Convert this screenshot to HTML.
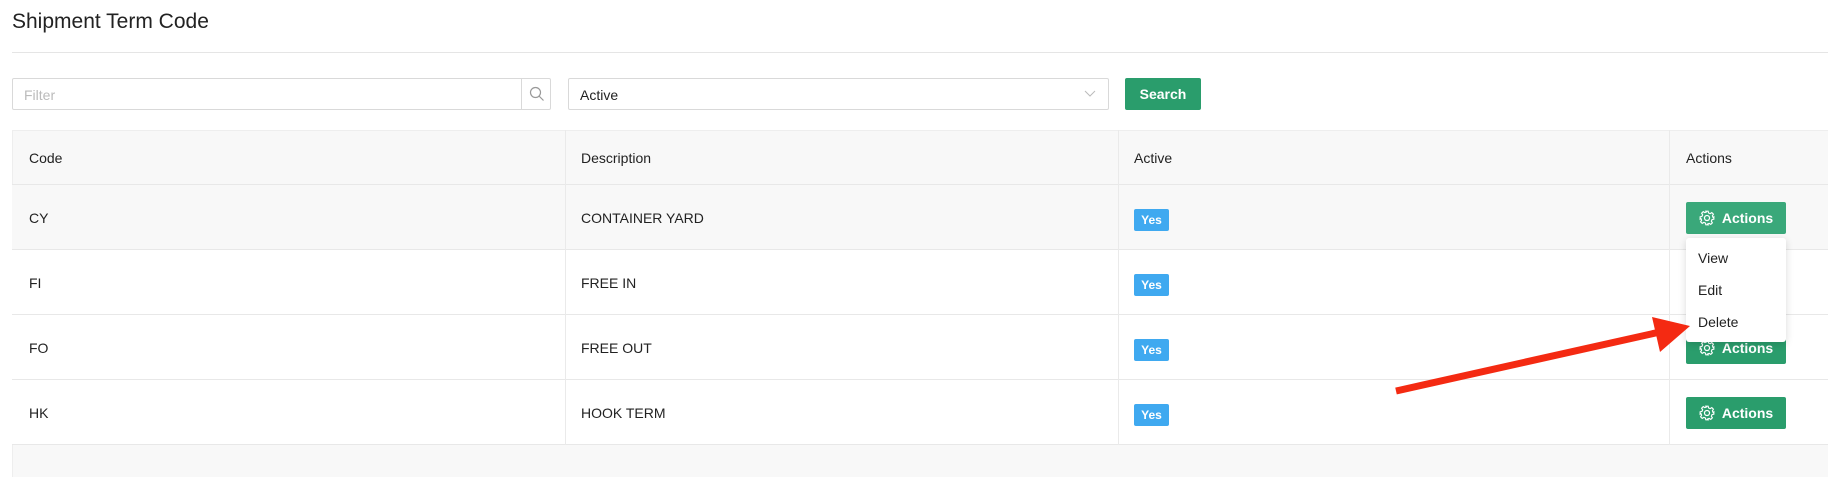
<!DOCTYPE html>
<html><head><meta charset="utf-8"><style>
*{box-sizing:border-box;margin:0;padding:0}
body{width:1828px;height:477px;overflow:hidden;background:#fff;font-family:"Liberation Sans",sans-serif;color:#222;position:relative;font-size:14px}
.abs{position:absolute}
.title{left:12px;top:10px;font-size:21px;color:#222}
.hr{left:12px;top:52px;width:1816px;height:1px;background:#e5e5e5}
.inp{top:78px;height:32px;border:1px solid #d9d9d9;border-radius:2px;background:#fff}
.btn{background:#2a9d6c;color:#fff;border-radius:2px;font-weight:bold;display:flex;align-items:center;justify-content:center}
.table{left:12px;top:130px;width:1816px;height:347px;background:#f8f8f8;border-left:1px solid #eee;border-top:1px solid #eee}
.row{position:absolute;left:12px;width:1816px;height:65px;border-bottom:1px solid #e8e8e8}
.vl{position:absolute;top:130px;height:315px;width:1px;background:#eaeaea}
.badge{position:absolute;left:1134px;width:35px;height:22px;background:#3fa9f0;color:#fff;font-size:12px;font-weight:bold;display:flex;align-items:center;justify-content:center;border-radius:2px}
.act{position:absolute;left:1686px;width:100px;height:32px;font-size:14px}
.act svg{margin-right:7px}
</style></head><body>
<div class="abs title">Shipment Term Code</div>
<div class="abs hr"></div>
<div class="abs inp" style="left:12px;width:539px"><span style="position:absolute;left:11px;top:8px;color:#bbb">Filter</span>
<div style="position:absolute;left:508px;top:0;width:1px;height:30px;background:#d9d9d9"></div>
<svg style="position:absolute;left:516px;top:7px" width="16" height="16" viewBox="0 0 16 16"><circle cx="6.5" cy="6.5" r="5" fill="none" stroke="#999" stroke-width="1.2"/><path d="M10 10l4.5 4.5" stroke="#999" stroke-width="1.2"/></svg></div>
<div class="abs inp" style="left:568px;width:541px"><span style="position:absolute;left:11px;top:8px">Active</span>
<svg style="position:absolute;right:12px;top:11px" width="12" height="8" viewBox="0 0 12 8"><path d="M1 1l5 5 5-5" fill="none" stroke="#bbb" stroke-width="1"/></svg></div>
<div class="abs btn" style="left:1125px;top:78px;width:76px;height:32px;font-size:14px">Search</div>
<div class="abs table"></div>
<div class="row" style="top:130px;height:55px"></div>
<div class="row" style="top:185px;background:#f8f8f8"></div>
<div class="row" style="top:250px;background:#fff"></div>
<div class="row" style="top:315px;background:#fff"></div>
<div class="row" style="top:380px;background:#fff"></div>
<div class="vl" style="left:565px"></div><div class="vl" style="left:1118px"></div><div class="vl" style="left:1669px"></div>
<div class="abs" style="left:29px;top:150px">Code</div><div class="abs" style="left:581px;top:150px">Description</div><div class="abs" style="left:1134px;top:150px">Active</div><div class="abs" style="left:1686px;top:150px">Actions</div>
<div class="abs" style="left:29px;top:210px">CY</div><div class="abs" style="left:581px;top:210px">CONTAINER YARD</div>
<div class="abs" style="left:29px;top:275px">FI</div><div class="abs" style="left:581px;top:275px">FREE IN</div>
<div class="abs" style="left:29px;top:340px">FO</div><div class="abs" style="left:581px;top:340px">FREE OUT</div>
<div class="abs" style="left:29px;top:405px">HK</div><div class="abs" style="left:581px;top:405px">HOOK TERM</div>
<div class="badge" style="top:209px">Yes</div><div class="badge" style="top:274px">Yes</div><div class="badge" style="top:339px">Yes</div><div class="badge" style="top:404px">Yes</div>
<div class="act btn" style="top:202px;background:#3aa87a"><svg width="16" height="16" viewBox="0 0 14 14"><circle cx="7" cy="7" r="2.2" fill="none" stroke="#fff" stroke-width="1.1"/><path d="M6 1h2l.4 1.6 1.4.6 1.4-.9 1.4 1.4-.9 1.4.6 1.4L13 6v2l-1.6.4-.6 1.4.9 1.4-1.4 1.4-1.4-.9-1.4.6L8 13H6l-.4-1.6-1.4-.6-1.4.9-1.4-1.4.9-1.4-.6-1.4L1 8V6l1.6-.4.6-1.4-.9-1.4 1.4-1.4 1.4.9 1.4-.6z" fill="none" stroke="#fff" stroke-width="1"/></svg>Actions</div>
<div class="act btn" style="top:332px"><svg width="16" height="16" viewBox="0 0 14 14"><circle cx="7" cy="7" r="2.2" fill="none" stroke="#fff" stroke-width="1.1"/><path d="M6 1h2l.4 1.6 1.4.6 1.4-.9 1.4 1.4-.9 1.4.6 1.4L13 6v2l-1.6.4-.6 1.4.9 1.4-1.4 1.4-1.4-.9-1.4.6L8 13H6l-.4-1.6-1.4-.6-1.4.9-1.4-1.4.9-1.4-.6-1.4L1 8V6l1.6-.4.6-1.4-.9-1.4 1.4-1.4 1.4.9 1.4-.6z" fill="none" stroke="#fff" stroke-width="1"/></svg>Actions</div>
<div class="act btn" style="top:397px"><svg width="16" height="16" viewBox="0 0 14 14"><circle cx="7" cy="7" r="2.2" fill="none" stroke="#fff" stroke-width="1.1"/><path d="M6 1h2l.4 1.6 1.4.6 1.4-.9 1.4 1.4-.9 1.4.6 1.4L13 6v2l-1.6.4-.6 1.4.9 1.4-1.4 1.4-1.4-.9-1.4.6L8 13H6l-.4-1.6-1.4-.6-1.4.9-1.4-1.4.9-1.4-.6-1.4L1 8V6l1.6-.4.6-1.4-.9-1.4 1.4-1.4 1.4.9 1.4-.6z" fill="none" stroke="#fff" stroke-width="1"/></svg>Actions</div>
<div class="abs" style="left:1686px;top:238px;width:100px;height:104px;background:#fff;border-radius:3px;box-shadow:0 2px 8px rgba(0,0,0,.15)">
<div style="position:absolute;left:12px;top:12px">View</div>
<div style="position:absolute;left:12px;top:44px">Edit</div>
<div style="position:absolute;left:12px;top:76px">Delete</div></div>
<svg class="abs" style="left:0;top:0" width="1828" height="477"><path d="M1396 391L1660 332" stroke="#f42a12" stroke-width="7"/><path d="M1690 326L1652 317L1660 352Z" fill="#f42a12"/></svg>
</body></html>
